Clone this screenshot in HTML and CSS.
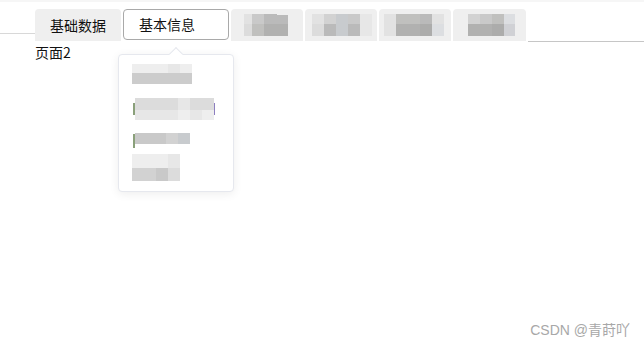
FILE: index.html
```html
<!DOCTYPE html>
<html>
<head>
<meta charset="utf-8">
<link rel="stylesheet" href="styles.css">
</head>
<body>
<div class="topband"></div>
<div class="tabbar">
  <div class="lead"></div>
  <div class="tab t1">基础数据</div>
  <div class="tab active">基本信息</div>
  <div class="tab blur p3">
    <div class="mosaic">
      <div class="col w8"><i class="k2"></i><i class="k3"></i></div>
      <div class="col w12"><i class="k5"></i><i class="k6"></i></div>
      <div class="col w13"><i class="k7"></i><i class="k8"></i></div>
      <div class="col w11"><i class="k7 dip"></i><i class="k8"></i></div>
    </div>
  </div>
  <div class="tab blur p4">
    <div class="mosaic">
      <div class="col w12"><i class="k2"></i><i class="k3"></i></div>
      <div class="col w12"><i class="k4"></i><i class="k7"></i></div>
      <div class="col w12"><i class="b1"></i><i class="b1"></i></div>
      <div class="col w12"><i class="k5"></i><i class="k7"></i></div>
      <div class="col w12"><i class="k1"></i><i class="k1"></i></div>
    </div>
  </div>
  <div class="tab blur p5">
    <div class="mosaic">
      <div class="col w12"><i class="k2"></i><i class="k2"></i></div>
      <div class="col w12"><i class="k6"></i><i class="k8"></i></div>
      <div class="col w12"><i class="k6"></i><i class="k8"></i></div>
      <div class="col w12"><i class="k7"></i><i class="k9"></i></div>
      <div class="col w12"><i class="k2"></i><i class="b2"></i></div>
    </div>
  </div>
  <div class="tab blur p6">
    <div class="mosaic">
      <div class="col w12"><i class="k4"></i><i class="k8"></i></div>
      <div class="col w12"><i class="k5"></i><i class="k8"></i></div>
      <div class="col w12"><i class="k6"></i><i class="k9"></i></div>
      <div class="col w11"><i class="b2"></i><i class="b3"></i></div>
    </div>
  </div>
  <div class="rest"></div>
</div>
<div class="content">页面2</div>

<div class="popper">
  <div class="arrow"></div>
  <div class="item i1">
    <div class="mosaic sm">
      <div class="col w11"><i class="k0"></i><i class="k5b"></i></div>
      <div class="col w13"><i class="k0"></i><i class="k5b"></i></div>
      <div class="col w12"><i class="k0"></i><i class="k5b"></i></div>
      <div class="col w12"><i class="k1"></i><i class="k5b"></i></div>
      <div class="col w12"><i class="k0"></i><i class="k5b"></i></div>
    </div>
  </div>
  <div class="item i2">
    <span class="mark green"></span>
    <div class="mosaic md">
      <div class="col w20"><i class="k3"></i><i class="k1"></i></div>
      <div class="col w11"><i class="k3"></i><i class="k1"></i></div>
      <div class="col w12"><i class="k3"></i><i class="k1"></i></div>
      <div class="col w12"><i class="k1"></i><i class="k0"></i></div>
      <div class="col w12"><i class="k3"></i><i class="k1"></i></div>
      <div class="col w12"><i class="k3"></i><i class="k0"></i></div>
    </div>
    <span class="mark purple"></span>
  </div>
  <div class="item i3">
    <span class="mark green"></span>
    <div class="mosaic one">
      <div class="col w19"><i class="k5"></i></div>
      <div class="col w12"><i class="k5"></i></div>
      <div class="col w12"><i class="k4"></i></div>
      <div class="col w12"><i class="b1"></i></div>
    </div>
  </div>
  <div class="item i4">
    <div class="mosaic lg">
      <div class="col w11"><i class="k0"></i><i class="k4"></i></div>
      <div class="col w13"><i class="k0"></i><i class="k4"></i></div>
      <div class="col w12"><i class="k0"></i><i class="k5"></i></div>
      <div class="col w12"><i class="k1"></i><i class="k3"></i></div>
    </div>
  </div>
</div>

<div class="watermark">CSDN @青莳吖</div>
</body>
</html>
```

FILE: styles.css
```css
* { box-sizing: border-box; }
html, body { margin: 0; padding: 0; }
body {
  width: 644px;
  height: 347px;
  background: #fff;
  font-family: "Microsoft YaHei", "Noto Sans CJK SC", "Liberation Sans", sans-serif;
  font-size: 14px;
  color: #111;
  position: relative;
  overflow: hidden;
}
.topband { height: 2px; background: #f6f6f6; }
.tabbar {
  display: flex;
  align-items: flex-start;
  height: 40px;
  padding-top: 7px;
}
.lead {
  width: 35px;
  height: 25px;
  border-bottom: 1px solid #d8d8d8;
  flex: none;
}
.tab {
  height: 32px;
  line-height: 32px;
  background: #efefef;
  border-radius: 4px 4px 0 0;
  margin-right: 2px;
  flex: none;
  color: #111;
  white-space: nowrap;
}
.t1 { width: 86px; padding-left: 15px; }
.active {
  width: 106px;
  height: 31px;
  line-height: 29px;
  background: #fff;
  border: 1px solid #a9a9a9;
  border-radius: 4px;
  padding-left: 15px;
}
.blur { width: 72px; padding-top: 5px; }
.p3 { padding-left: 13px; }
.p4 { padding-left: 7px; }
.p5 { padding-left: 5px; }
.p6 { padding-left: 15px; width: 73px; }
.rest {
  flex: 1;
  height: 33px;
  border-bottom: 1px solid #c6c6c6;
}
.mosaic { display: flex; }
.col { display: flex; flex-direction: column; }
.col i { display: block; height: 10px; }
.col i + i { height: 12px; }
.w8 { width: 8px; } .w11 { width: 11px; } .w12 { width: 12px; } .w13 { width: 13px; }
.w19 { width: 19px; } .w20 { width: 20px; }
.dip { margin-top: 1px; height: 9px !important; }
.k0 { background: #eeeeee; }
.k1 { background: #e7e7e7; }
.k2 { background: #e2e2e2; }
.k3 { background: #dcdcdc; }
.k4 { background: #d2d2d2; }
.k5 { background: #c9c9c9; }
.k5b { background: #cccccc; }
.k6 { background: #c0c0be; }
.k7 { background: #bababa; }
.k8 { background: #b1b1b0; }
.k9 { background: #acacab; }
.b1 { background: #c8cbce; }
.b2 { background: #dcdee1; }
.b3 { background: #d0d1d5; }

.content {
  padding-left: 35px;
  line-height: 20px;
  color: #111;
}

.popper {
  position: absolute;
  left: 118px;
  top: 54px;
  width: 116px;
  height: 138px;
  background: #fff;
  border: 1px solid #e6e8ee;
  border-radius: 4px;
  box-shadow: 0 2px 10px rgba(0,0,0,0.07);
  padding-top: 9px;
}
.arrow {
  position: absolute;
  top: -6px;
  left: 52px;
  width: 10px;
  height: 10px;
  background: #fff;
  border-top: 1px solid #e6e8ee;
  border-left: 1px solid #e6e8ee;
  transform: rotate(45deg);
}
.item { display: flex; align-items: center; padding-left: 13px; }
.i1 { height: 20px; }
.i1 .col i { height: 9px; }
.i1 .col i + i { height: 11px; }
.i2 { margin-top: 13px; height: 23px; padding-left: 16px; }
.i2 .col i { height: 12px; }
.i2 .col i + i { height: 10px; }
.i3 { margin-top: 13px; height: 15px; padding-left: 16px; align-items: flex-start; }
.i3 .col i { height: 11px; }
.i4 { margin-top: 6px; height: 27px; }
.i4 .col i { height: 14px; }
.i4 .col i + i { height: 13px; }
.mark { display: block; width: 2px; height: 12px; flex: none; }
.green { background: #8aa07a; margin-left: -2px; }
.i3 .green { height: 14px; margin-top: 1px; }
.purple { background: #8d7fc0; width: 1px; }

.watermark {
  position: absolute;
  right: 14px;
  top: 321px;
  font-family: "Liberation Sans", "Noto Sans CJK SC", sans-serif;
  font-size: 14px;
  color: #a8a8a8;
  line-height: 18px;
}
```
